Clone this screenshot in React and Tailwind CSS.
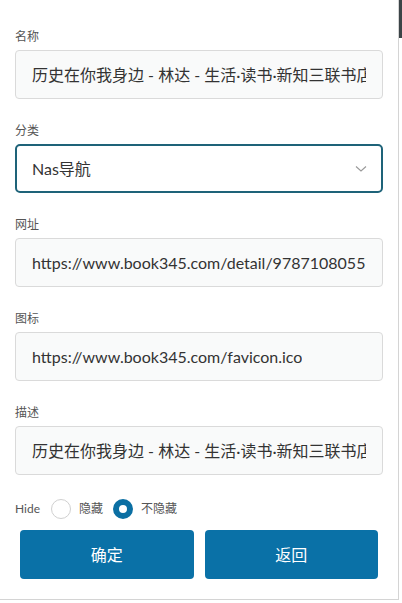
import React from "react";

const font = { fontFamily: 'Lato, "Noto Sans CJK SC", sans-serif' };

function Label({ children }) {
  return <div className="text-[12px] leading-[18px] text-[#555] mb-[4px]">{children}</div>;
}

function Input({ value }) {
  return (
    <div className="h-[49px] rounded-[4px] border border-[#dadada] bg-[#f9fafa] pl-[16px] pr-[16px] flex items-center overflow-hidden">
      <div className="text-[16px] text-[#333] whitespace-nowrap overflow-hidden">{value}</div>
    </div>
  );
}

export default function App() {
  return (
    <div className="flex w-[402px] h-[603px] bg-white" style={font}>
      <div className="w-[399px] h-[600px] border-r border-b border-[#d4d4d4] bg-white">
        <div className="pl-[15px] pr-[15px] pt-[28px]">
          <Label>名称</Label>
          <Input value="历史在你我身边 - 林达 - 生活·读书·新知三联书店" />

          <div className="mt-[23px]">
            <Label>分类</Label>
            <div className="h-[49px] rounded-[5px] border-2 border-[#1e6379] bg-white pl-[15px] pr-[14px] flex items-center justify-between">
              <span className="text-[16px] text-[#333]">Nas导航</span>
              <svg width="12" height="8" viewBox="0 0 12 8">
                <path d="M1 1.5 L6 6 L11 1.5" fill="none" stroke="#999" strokeWidth="1.1" />
              </svg>
            </div>
          </div>

          <div className="mt-[23px]">
            <Label>网址</Label>
            <Input value="https://www.book345.com/detail/9787108055743" />
          </div>

          <div className="mt-[23px]">
            <Label>图标</Label>
            <Input value="https://www.book345.com/favicon.ico" />
          </div>

          <div className="mt-[23px]">
            <Label>描述</Label>
            <Input value="历史在你我身边 - 林达 - 生活·读书·新知三联书店" />
          </div>

          <div className="mt-[24px] h-[20px] flex items-center text-[12px] text-[#555]">
            <span className="mr-[11px]">Hide</span>
            <span className="w-[20px] h-[20px] rounded-full border-[1.5px] border-[#d0d0d0] bg-white"></span>
            <span className="ml-[8px] mr-[10px]">隐藏</span>
            <span className="w-[20px] h-[20px] rounded-full border-[6px] border-[#0b6fa3] bg-white"></span>
            <span className="ml-[8px]">不隐藏</span>
          </div>

          <div className="mt-[11px] mx-[5px] flex gap-[11px]">
            <button className="flex-1 h-[49px] rounded-[4px] bg-[#0a71a7] text-white text-[16px]">确定</button>
            <button className="flex-1 h-[49px] rounded-[4px] bg-[#0a71a7] text-white text-[16px]">返回</button>
          </div>
        </div>
      </div>
      <div className="w-[3px] h-[603px] flex flex-col">
        <div className="h-[38px] bg-[#3b4447]"></div>
      </div>
    </div>
  );
}
